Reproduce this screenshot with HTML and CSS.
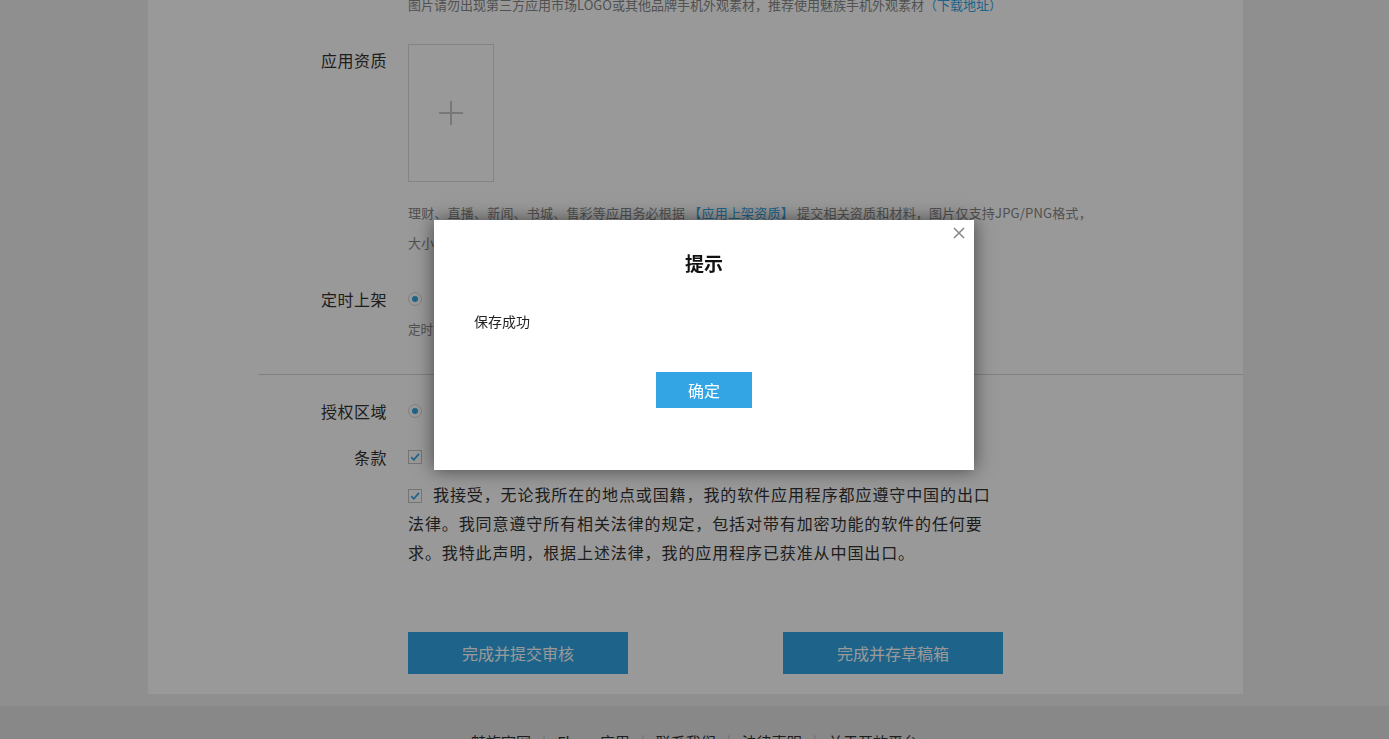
FILE: index.html
```html
<!DOCTYPE html>
<html lang="zh-CN">
<head>
<meta charset="utf-8">
<title>应用信息</title>
<link rel="stylesheet" href="styles.css">
</head>
<body>
<main class="card">
  <div class="row">
    <div class="label"></div>
    <p class="hint">图片请勿出现第三方应用市场LOGO或其他品牌手机外观素材，推荐使用魅族手机外观素材<a class="link">（下载地址）</a></p>
  </div>

  <div class="row row-qual">
    <div class="label">应用资质</div>
    <div class="field">
      <div class="upload"><span class="plus"></span></div>
      <p class="note">理财、直播、新闻、书城、售彩等应用务必根据 <a class="link">【应用上架资质】</a> 提交相关资质和材料，图片仅支持JPG/PNG格式，<br>大小不超过5M，最多可上传5张图片</p>
    </div>
  </div>

  <div class="row row-time">
    <div class="label">定时上架</div>
    <div class="field">
      <div class="opt-line"><span class="radio"></span><span class="opt-text">立即上架</span></div>
      <p class="note2">定时上架：审核通过后应用将在您设定的时间自动发布，若审核通过时已超过设定时间将立即上线</p>
    </div>
  </div>

  <div class="sep"></div>

  <div class="row row-area">
    <div class="label">授权区域</div>
    <div class="field">
      <div class="opt-line"><span class="radio"></span><span class="opt-text">中国大陆</span></div>
    </div>
  </div>

  <div class="row row-terms">
    <div class="label">条款</div>
    <div class="field">
      <div class="opt-line"><span class="check"><svg viewBox="0 0 14 14" width="14" height="14"><path d="M2.5 7.2 L5.6 10.2 L11.6 3.4" fill="none" stroke="#32a6e6" stroke-width="2"/></svg></span><span class="opt-text">我已阅读并同意《魅族开放平台开发者服务协议》</span></div>
      <p class="terms"><span class="check"><svg viewBox="0 0 14 14" width="14" height="14"><path d="M2.5 7.2 L5.6 10.2 L11.6 3.4" fill="none" stroke="#32a6e6" stroke-width="2"/></svg></span>我接受，无论我所在的地点或国籍，我的软件应用程序都应遵守中国的出口<br>法律。我同意遵守所有相关法律的规定，包括对带有加密功能的软件的任何要<br>求。我特此声明，根据上述法律，我的应用程序已获准从中国出口。</p>
      <div class="actions">
        <button class="btn">完成并提交审核</button>
        <button class="btn">完成并存草稿箱</button>
      </div>
    </div>
  </div>
</main>

<footer class="footer">
  <nav class="footer-nav">
    <a>魅族官网</a><span class="bar">|</span><a>Flyme应用</a><span class="bar">|</span><a>联系我们</a><span class="bar">|</span><a>法律声明</a><span class="bar">|</span><a>关于开放平台</a>
  </nav>
</footer>

<div class="overlay"></div>
<div class="modal">
  <button class="close" aria-label="关闭"><svg viewBox="0 0 12 12" width="12" height="12"><path d="M1 1 L11 11 M11 1 L1 11" stroke="#8a8a8a" stroke-width="1.6" fill="none"/></svg></button>
  <h2 class="modal-title">提示</h2>
  <p class="modal-body">保存成功</p>
  <div class="modal-foot"><button class="modal-btn">确定</button></div>
</div>
</body>
</html>
```

FILE: styles.css
```css
* { box-sizing: border-box; }
html, body { margin: 0; padding: 0; }
body {
  background: #eeeeee;
  font-family: "Noto Sans CJK SC", "Noto Sans", sans-serif;
  color: #333;
  overflow: hidden;
}
p { margin: 0; }
a { text-decoration: none; }

.card {
  width: 1095px;
  margin: -10px 0 0 148px;
  background: #ffffff;
  padding-bottom: 20px;
}
.row {
  display: flex;
  padding-left: 110px;
}
.label {
  flex: none;
  width: 150px;
  padding-right: 21px;
  text-align: right;
  font-size: 16px;
  line-height: 32px;
  letter-spacing: 0.5px;
  color: #333;
}
.field { flex: none; width: 700px; }

.hint {
  font-size: 13px;
  line-height: 30px;
  color: #888;
  white-space: nowrap;
}
.link { color: #32a6e6; }

.row-qual { margin-top: 24px; }
.upload {
  width: 86px;
  height: 138px;
  border: 1px solid #dddddd;
  display: flex;
  align-items: center;
  justify-content: center;
}
.plus {
  position: relative;
  width: 24px;
  height: 24px;
}
.plus::before, .plus::after {
  content: "";
  position: absolute;
  background: #c8c8c8;
}
.plus::before { left: 0; right: 0; top: 11px; height: 2px; }
.plus::after { top: 0; bottom: 0; left: 11px; width: 2px; }

.note {
  margin-top: 16px;
  font-size: 13px;
  line-height: 30px;
  letter-spacing: 0.2px;
  color: #888;
  white-space: nowrap;
}

.row-time { margin-top: 25px; }
.opt-line {
  display: flex;
  align-items: center;
  height: 32px;
  font-size: 14px;
  color: #333;
}
.radio {
  width: 14px;
  height: 14px;
  border: 1px solid #dadada;
  border-radius: 50%;
  margin-right: 12px;
  display: flex;
  align-items: center;
  justify-content: center;
}
.radio::after {
  content: "";
  width: 6px;
  height: 6px;
  border-radius: 50%;
  background: #32a6e6;
}
.note2 {
  font-size: 12.6px;
  line-height: 28px;
  color: #888;
  white-space: nowrap;
}

.sep {
  margin: 31px 0 0 110px;
  border-top: 1px solid #d8d8d8;
}

.row-area { margin-top: 20px; }
.row-terms { margin-top: 14px; }

.check {
  display: inline-flex;
  width: 14px;
  height: 14px;
  border: 1px solid #c4c4c4;
  margin-right: 11px;
  vertical-align: -1px;
  align-items: center;
  justify-content: center;
  background: #fff;
}
.check svg { display: block; width: 12px; height: 12px; }
.opt-line .check { margin-right: 12px; }

.terms {
  margin-top: 7px;
  font-size: 16px;
  line-height: 29px;
  letter-spacing: 0.9px;
  color: #333;
  white-space: nowrap;
}

.actions {
  margin-top: 65px;
  display: flex;
  gap: 155px;
}
.btn {
  width: 220px;
  height: 42px;
  border: none;
  background: #32a6e6;
  color: #ffffff;
  font-family: inherit;
  font-size: 16px;
  padding: 0;
}

.footer {
  margin-top: 12px;
  background: #e3e3e3;
  height: 80px;
  padding-top: 21px;
}
.footer-nav {
  display: flex;
  justify-content: center;
  font-size: 15px;
  line-height: 30px;
  color: #333;
}
.footer-nav a { color: #333; }
.bar { color: #bbb; margin: 0 11px; }

.overlay {
  position: fixed;
  inset: 0;
  background: rgba(0, 0, 0, 0.4);
}
.modal {
  position: fixed;
  left: 434px;
  top: 220px;
  width: 540px;
  height: 250px;
  background: #ffffff;
  box-shadow: 0 0 18px rgba(0, 0, 0, 0.55);
  padding-top: 28px;
}
.close {
  position: absolute;
  top: 7px;
  left: 519px;
  width: 12px;
  height: 12px;
  padding: 0;
  border: none;
  background: transparent;
}
.close svg { display: block; }
.modal-title {
  margin: 0;
  text-align: center;
  font-size: 19px;
  line-height: 30px;
  font-weight: bold;
  color: #111;
}
.modal-body {
  margin-top: 33px;
  padding-left: 40px;
  font-size: 14px;
  line-height: 20px;
  color: #222;
}
.modal-foot {
  margin-top: 41px;
  display: flex;
  justify-content: center;
}
.modal-btn {
  width: 96px;
  height: 36px;
  border: none;
  padding: 0;
  background: #33a5e5;
  color: #fff;
  font-family: inherit;
  font-size: 16px;
}
```
